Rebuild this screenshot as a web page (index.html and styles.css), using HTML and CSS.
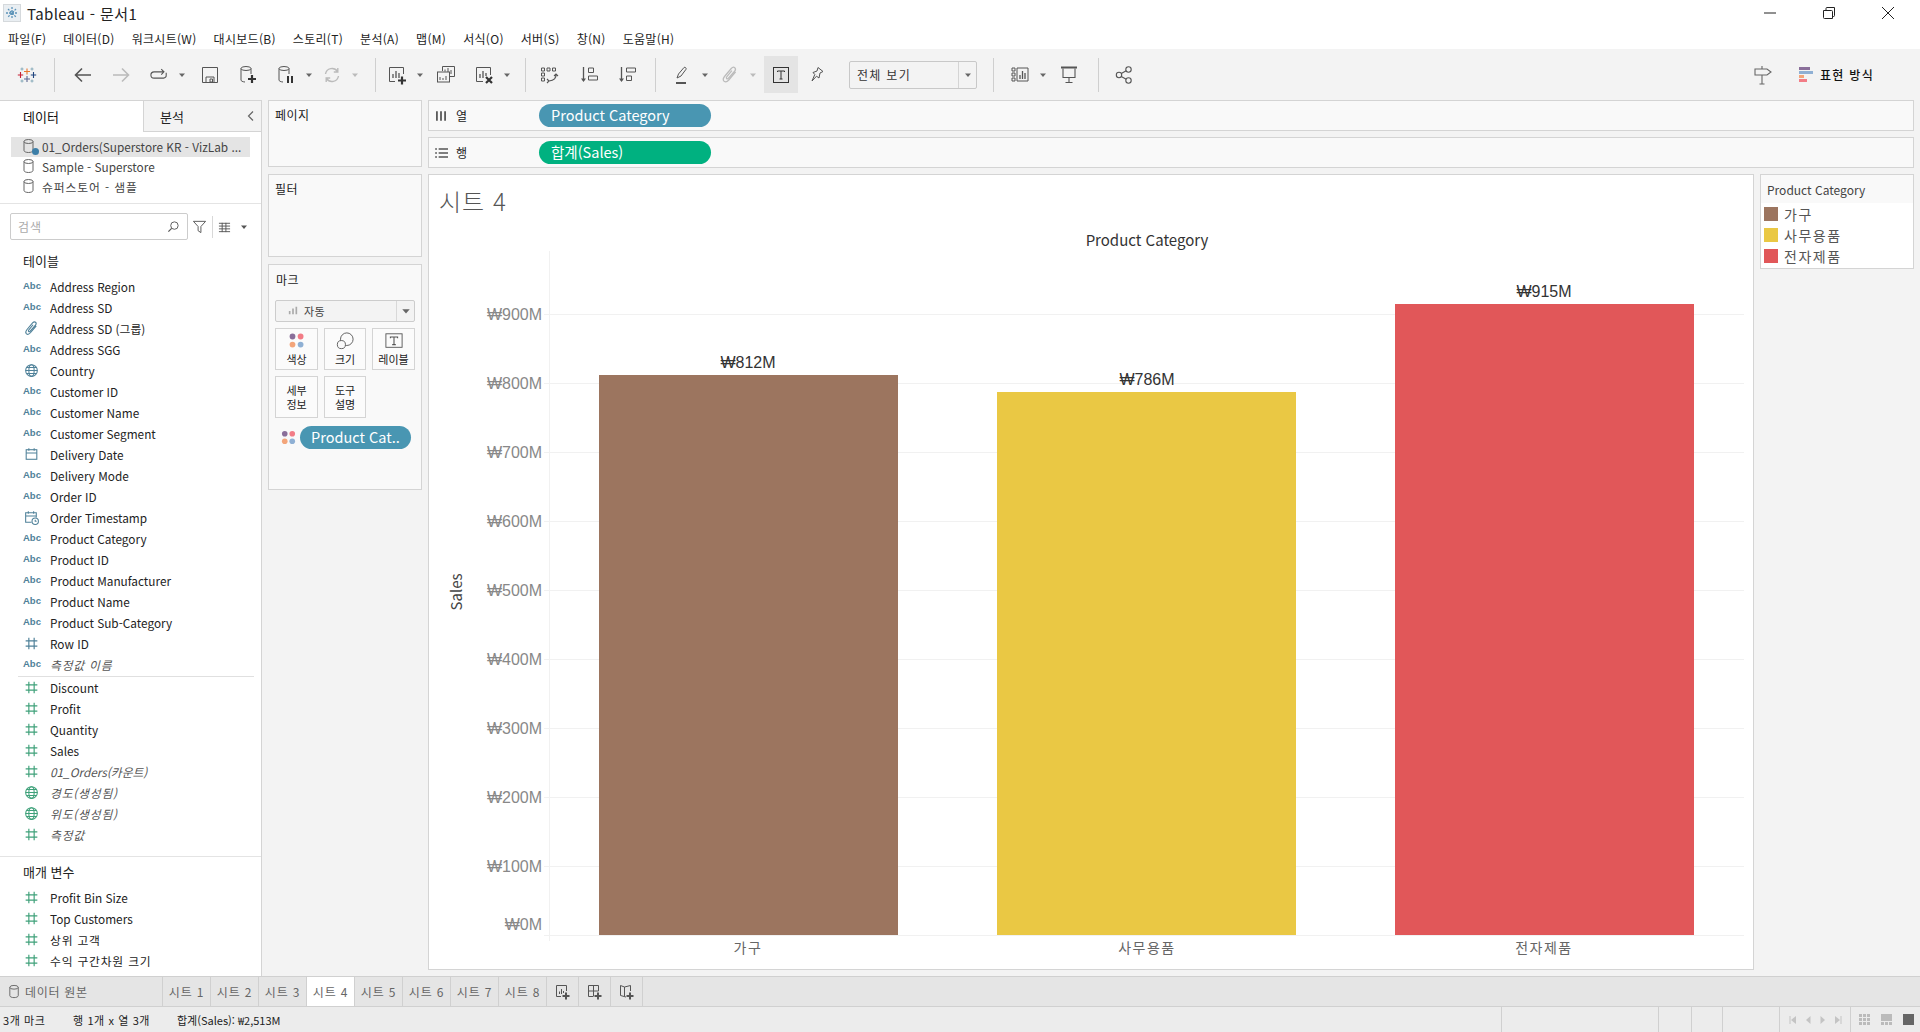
FILE: index.html
```html
<!DOCTYPE html>
<html lang="ko">
<head>
<meta charset="utf-8">
<title>Tableau - 문서1</title>
<link rel="stylesheet" href="styles.css">
</head>
<body>
<svg class="defs" aria-hidden="true">
  <symbol id="i-hash" viewBox="0 0 16 16"><path d="M5.500 2.500v11M10.500 2.500v11M2.500 5.500h11M2.500 10.500h11" fill="none" stroke="currentColor" stroke-width="1.100"/></symbol>
  <symbol id="i-globe" viewBox="0 0 16 16"><g fill="none" stroke="currentColor" stroke-width="1"><circle cx="8" cy="8" r="5.500"/><ellipse cx="8" cy="8" rx="2.500" ry="5.500"/><path d="M2.500 8h11M3.300 5.200h9.400M3.300 10.800h9.400"/></g></symbol>
  <symbol id="i-cal" viewBox="0 0 16 16"><g fill="none" stroke="currentColor" stroke-width="1"><rect x="3" y="3.500" width="10" height="9"/><path d="M3 6.500h10M5.500 2v2.500M10.500 2v2.500"/></g></symbol>
  <symbol id="i-calclock" viewBox="0 0 16 16"><g fill="none" stroke="currentColor" stroke-width="1"><path d="M8 12.500H2.500v-9h10V8M2.500 6.500h10M5 2v2.500M10 2v2.500"/><circle cx="11.500" cy="11.500" r="3"/><path d="M11.500 10v1.600h1.300"/></g></symbol>
  <symbol id="i-clip" viewBox="0 0 16 16"><path d="M12.500 5.500 7 12c-1.300 1.500-2.700 1.800-3.700 1-1-.9-.9-2.300.3-3.800l5.400-6.400c1-1.100 2-1.300 2.800-.7.800.7.800 1.700-.1 2.800L6.800 10.500c-.5.600-1.100.7-1.500.4-.4-.4-.3-1 .2-1.600l4-4.800" fill="none" stroke="currentColor" stroke-width="1"/></symbol>
  <symbol id="i-db" viewBox="0 0 16 16"><g fill="none" stroke="currentColor" stroke-width="1"><ellipse cx="7.500" cy="3.500" rx="4.500" ry="2"/><path d="M3 3.500v9c0 1.100 2 2 4.500 2s4.500-.9 4.500-2v-9"/></g></symbol>
  <symbol id="i-dd" viewBox="0 0 8 8"><path d="M1 2.500h6L4 6z" fill="currentColor"/></symbol>
</svg>

<header class="titlebar">
  <svg class="app-icon" viewBox="0 0 18 18"><rect x=".5" y=".5" width="17" height="17" fill="#e9eef2" stroke="#d5d9dc"/><path d="M9 3v12M3 9h12M5 5l8 8M13 5l-8 8" stroke="#5c93b8" stroke-width="1.300" stroke-dasharray="2 1"/></svg>
  <span class="app-title">Tableau - 문서1</span>
  <div class="winctl">
    <svg viewBox="0 0 14 14"><path d="M1 7h12" stroke="#222" fill="none"/></svg>
    <svg viewBox="0 0 14 14"><path d="M1.500 4.500h8a1 1 0 0 1 1 1v7h-8a1 1 0 0 1-1-1zM4 4.500V2.500a1 1 0 0 1 1-1h7.500v8a1 1 0 0 1-1 1h-1" stroke="#222" fill="none"/></svg>
    <svg viewBox="0 0 14 14"><path d="M1 1l12 12M13 1 1 13" stroke="#222" fill="none"/></svg>
  </div>
</header>

<nav class="menubar">
  <span>파일(F)</span><span>데이터(D)</span><span>워크시트(W)</span><span>대시보드(B)</span><span>스토리(T)</span><span>분석(A)</span><span>맵(M)</span><span>서식(O)</span><span>서버(S)</span><span>창(N)</span><span>도움말(H)</span>
</nav>

<div class="toolbar">
  <div class="tb"><svg viewBox="0 0 20 20"><g fill="none" stroke-width="1.100"><path d="M10 3.500v6M7 6.500h6" stroke="#e8762c"/><path d="M10 11v6M7 14h6" stroke="#5b6591"/><path d="M3.500 7v6M.8 10h5.400" stroke="#c72035"/><path d="M16.500 7v6M13.800 10h5.400" stroke="#1f447e"/><path d="M5 2.500v3M3.500 4h3M15 2.500v3M13.500 4h3M5 14.500v3M3.500 16h3M15 14.500v3M13.500 16h3" stroke="#7fa5b5" stroke-width=".9"/></g></svg></div>
  <i class="sep ml-8 mr-9"></i>
  <div class="tb"><svg viewBox="0 0 20 20"><path d="M18 10H3M9 3.500 2.500 10 9 16.500" fill="none" stroke="#555" stroke-width="1.600"/></svg></div>
  <div class="tb off"><svg viewBox="0 0 20 20"><path d="M2 10h15M11 3.500l6.500 6.500-6.500 6.500" fill="none" stroke="#bbb" stroke-width="1.600"/></svg></div>
  <div class="tb"><svg class="loop" viewBox="0 0 20 20"><path d="M15 6.500H4.500a3 3 0 0 0 0 7H15a3 3 0 0 0 3-3.500V7.500M12.500 3.500l3 3-3 3" fill="none" stroke="#555" stroke-width="1.200"/></svg></div>
  <svg class="dd"><use href="#i-dd"/></svg>
  <div class="tb ml-5"><svg viewBox="0 0 20 20"><path d="M2.500 2.500h15v15h-15zM6 17v-5h8v5M10 14h2.500v3H10z" fill="none" stroke="#555"/></svg></div>
  <div class="tb"><svg viewBox="0 0 20 20"><g fill="none" stroke="#555"><ellipse cx="8" cy="3.500" rx="5" ry="2"/><path d="M3 3.500V15c0 1 1.500 1.800 4 2M13 3.500V9"/></g><path d="M14 10v8M10 14h8" stroke="#333" stroke-width="2.200"/></svg></div>
  <div class="tb"><svg viewBox="0 0 20 20"><g fill="none" stroke="#555"><ellipse cx="8" cy="3.500" rx="5" ry="2"/><path d="M3 3.500V15c0 1 1.500 1.800 4 2M13 3.500V9"/></g><path d="M12 11v7M16 11v7" stroke="#333" stroke-width="2"/></svg></div>
  <svg class="dd"><use href="#i-dd"/></svg>
  <div class="tb off"><svg viewBox="0 0 20 20"><path d="M3.500 9a6.600 6.600 0 0 1 12-2.500M16.500 11a6.600 6.600 0 0 1-12 2.500M15.800 3v4h-4M4.200 17v-4h4" fill="none" stroke="#bbb" stroke-width="1.400"/></svg></div>
  <svg class="dd off"><use href="#i-dd"/></svg>
  <i class="sep ml-16 mr-2"></i>
  <div class="tb"><svg viewBox="0 0 20 20"><path d="M8 16.500H2.500v-14h14V9" fill="none" stroke="#555"/><path d="M6 13V9M9 13V6M12 13V8" stroke="#555" stroke-width="1.300"/><path d="M15 11.500v8M11 15.500h8" stroke="#333" stroke-width="2.200"/></svg></div>
  <svg class="dd"><use href="#i-dd"/></svg>
  <div class="tb ml-3"><svg viewBox="0 0 20 20"><g fill="none" stroke="#555"><path d="M6.500 6V1.500h12v10H14"/><rect x="1.500" y="7" width="12" height="10"/></g><path d="M9 4.500v2M12 3v4M15 5v4M4 15v-3M7 15v-2M10 15v-4" stroke="#555"/></svg></div>
  <div class="tb"><svg viewBox="0 0 20 20"><path d="M9 16.500H2.500v-14h14V10" fill="none" stroke="#555"/><path d="M6 13V9M9 13V6M12 11V8" stroke="#555" stroke-width="1.300"/><path d="M12 12l6 6M18 12l-6 6" stroke="#333" stroke-width="2.200"/></svg></div>
  <svg class="dd"><use href="#i-dd"/></svg>
  <i class="sep ml-14 mr-4"></i>
  <div class="tb"><svg viewBox="0 0 20 20"><path d="M2.500 3h3v3h-3zM8 3h3v3H8zM13.500 3h3v3h-3zM2.500 8h3v3h-3zM2.500 13h3v3h-3z" fill="none" stroke="#555"/><path d="M17 9c.5 4-2 6.500-7 7M8 14l2 2-2 2M15 11l2-2 2 2" fill="none" stroke="#555" stroke-width="1.100"/></svg></div>
  <div class="tb ml-2"><svg viewBox="0 0 20 20"><path d="M4.500 2v14" stroke="#555" stroke-width="1.300"/><path d="M2 13.500l2.500 3.500L7 13.500z" fill="#555"/><path d="M9.500 3h5v4.500h-5zM9.500 11h9v4h-9z" fill="none" stroke="#555"/></svg></div>
  <div class="tb"><svg viewBox="0 0 20 20"><path d="M4.500 2v14" stroke="#555" stroke-width="1.300"/><path d="M2 13.500l2.500 3.500L7 13.500z" fill="#555"/><path d="M9.500 3h9v4h-9zM9.500 11h5v4.500h-5z" fill="none" stroke="#555"/></svg></div>
  <i class="sep ml-9 mr-7"></i>
  <div class="tb"><svg viewBox="0 0 20 20"><path d="M5 13l1.500-4L12 2.500c1-.8 2.700.6 2 1.800L9 11z" fill="none" stroke="#555"/><path d="M4 18h10" stroke="#555" stroke-width="2"/></svg></div>
  <svg class="dd"><use href="#i-dd"/></svg>
  <div class="tb off ml-2"><svg viewBox="0 0 16 16"><use href="#i-clip"/></svg></div>
  <svg class="dd off"><use href="#i-dd"/></svg>
  <div class="tb tb-on ml-7"><svg viewBox="0 0 20 20"><rect x="2.500" y="2.500" width="15" height="15" fill="none" stroke="#333"/><path d="M6.500 7V6h7v1M10 6v8M8.500 14h3" fill="none" stroke="#333"/></svg></div>
  <div class="tb"><svg viewBox="0 0 20 20"><path d="M11 2.500l5 4-3 1.500-1 5-2.500-1.800L5 16l2.800-6.500L6 7.500l4-1.500z" fill="none" stroke="#555"/></svg></div>
  <div class="fit ml-13"><span class="fit-label">전체 보기</span><span class="fit-arrow"><svg class="dd"><use href="#i-dd"/></svg></span></div>
  <i class="sep ml-16 mr-7"></i>
  <div class="tb"><svg viewBox="0 0 20 20"><path d="M2 3h3v3H2zM2 8h3v3H2zM2 13h3v3H2zM7 3h11v13H7z" fill="none" stroke="#555"/><path d="M10 14V10M12.500 14V6M15 14V8" stroke="#555" stroke-width="1.300"/></svg></div>
  <svg class="dd"><use href="#i-dd"/></svg>
  <div class="tb ml-3"><svg viewBox="0 0 20 20"><path d="M4 3.500v9h12v-9M10 12.500V17M6.500 17.500h7" fill="none" stroke="#555" stroke-width="1.100"/><path d="M2 2.500h16" stroke="#555" stroke-width="2"/></svg></div>
  <i class="sep ml-10 mr-6"></i>
  <div class="tb"><svg viewBox="0 0 20 20"><g fill="none" stroke="#555" stroke-width="1.100"><circle cx="5" cy="10" r="2.700"/><circle cx="14.500" cy="4.500" r="2.700"/><circle cx="14.500" cy="15.500" r="2.700"/><path d="M7.300 8.600l4.900-2.800M7.300 11.400l4.900 2.800"/></g></svg></div>
  <div class="tb-right">
    <svg class="sign" viewBox="0 0 20 20"><path d="M2 4h12l4 3-4 3H2zM9 1v3M9 10v9M6.500 19h5" fill="none" stroke="#666" stroke-width="1.100"/></svg>
    <div class="showme">
      <svg viewBox="0 0 15 16"><rect y="0" width="11" height="3" fill="#8a6f9a"/><rect y="4" width="14" height="3" fill="#8fb0d4"/><rect y="8" width="5" height="3" fill="#f3a57a"/><rect y="12" width="8" height="3" fill="#f27c86"/></svg>
      <span>표현 방식</span>
    </div>
  </div>
</div>

<main class="workspace">
  <aside class="sidebar">
    <div class="side-tabs">
      <div class="side-tab on">데이터</div>
      <div class="side-tab">분석<svg class="chev" viewBox="0 0 8 12"><path d="M6 1.500 1.500 6 6 10.500" fill="none" stroke="#666" stroke-width="1.200"/></svg></div>
    </div>
    <ul class="sources">
      <li class="source sel"><svg class="src-ico"><use href="#i-db"/></svg><b class="src-check"></b>01_Orders(Superstore KR - VizLab ...</li>
      <li class="source"><svg class="src-ico"><use href="#i-db"/></svg>Sample - Superstore</li>
      <li class="source ko"><svg class="src-ico"><use href="#i-db"/></svg>슈퍼스토어 - 샘플</li>
    </ul>
    <div class="searchrow">
      <div class="search"><span>검색</span><svg viewBox="0 0 14 14"><circle cx="8" cy="6" r="4" fill="none" stroke="#555"/><path d="M5 9l-3.500 3.500" stroke="#555" stroke-width="1.300"/></svg></div>
      <svg class="funnel" viewBox="0 0 16 16"><path d="M1.500 2.500h13L9.500 8v6.500l-3-2V8z" fill="none" stroke="#555"/></svg>
      <i class="search-sep"></i>
      <svg class="gridico" viewBox="0 0 14 12"><path d="M1 2h12M1 5h12M1 8h12M1 11h12M4.500 1.500v10M8.500 1.500v10" stroke="#555"/></svg>
      <svg class="griddd"><use href="#i-dd"/></svg>
    </div>
    <h2 class="side-h">테이블</h2>
    <ul class="fields">
      <li class="f"><span class="abc">Abc</span>Address Region</li>
      <li class="f"><span class="abc">Abc</span>Address SD</li>
      <li class="f"><svg class="fi"><use href="#i-clip"/></svg>Address SD (그룹)</li>
      <li class="f"><span class="abc">Abc</span>Address SGG</li>
      <li class="f"><svg class="fi"><use href="#i-globe"/></svg>Country</li>
      <li class="f"><span class="abc">Abc</span>Customer ID</li>
      <li class="f"><span class="abc">Abc</span>Customer Name</li>
      <li class="f"><span class="abc">Abc</span>Customer Segment</li>
      <li class="f"><svg class="fi"><use href="#i-cal"/></svg>Delivery Date</li>
      <li class="f"><span class="abc">Abc</span>Delivery Mode</li>
      <li class="f"><span class="abc">Abc</span>Order ID</li>
      <li class="f"><svg class="fi"><use href="#i-calclock"/></svg>Order Timestamp</li>
      <li class="f"><span class="abc">Abc</span>Product Category</li>
      <li class="f"><span class="abc">Abc</span>Product ID</li>
      <li class="f"><span class="abc">Abc</span>Product Manufacturer</li>
      <li class="f"><span class="abc">Abc</span>Product Name</li>
      <li class="f"><span class="abc">Abc</span>Product Sub-Category</li>
      <li class="f"><svg class="fi"><use href="#i-hash"/></svg>Row ID</li>
      <li class="f gen ko"><span class="abc">Abc</span>측정값 이름</li>
    </ul>
    <hr class="split">
    <ul class="fields">
      <li class="f m"><svg class="fi"><use href="#i-hash"/></svg>Discount</li>
      <li class="f m"><svg class="fi"><use href="#i-hash"/></svg>Profit</li>
      <li class="f m"><svg class="fi"><use href="#i-hash"/></svg>Quantity</li>
      <li class="f m"><svg class="fi"><use href="#i-hash"/></svg>Sales</li>
      <li class="f m gen"><svg class="fi"><use href="#i-hash"/></svg>01_Orders(카운트)</li>
      <li class="f m gen ko"><svg class="fi"><use href="#i-globe"/></svg>경도(생성됨)</li>
      <li class="f m gen ko"><svg class="fi"><use href="#i-globe"/></svg>위도(생성됨)</li>
      <li class="f m gen ko"><svg class="fi"><use href="#i-hash"/></svg>측정값</li>
    </ul>
    <hr class="split-full">
    <h2 class="side-h params">매개 변수</h2>
    <ul class="fields">
      <li class="f m"><svg class="fi"><use href="#i-hash"/></svg>Profit Bin Size</li>
      <li class="f m"><svg class="fi"><use href="#i-hash"/></svg>Top Customers</li>
      <li class="f m ko"><svg class="fi"><use href="#i-hash"/></svg>상위 고객</li>
      <li class="f m ko"><svg class="fi"><use href="#i-hash"/></svg>수익 구간차원 크기</li>
    </ul>
  </aside>

  <section class="cards">
    <div class="card card-pages"><div class="card-t">페이지</div></div>
    <div class="card card-filters"><div class="card-t">필터</div></div>
    <div class="card card-marks">
      <div class="card-t marks-t">마크</div>
      <div class="mark-type">
        <svg viewBox="0 0 12 12"><path d="M2 10V6M6 10V3M10 10V1" stroke="#aaa" stroke-width="2"/></svg>
        <span>자동</span>
        <span class="mark-arrow"><svg class="dd"><use href="#i-dd"/></svg></span>
      </div>
      <div class="mark-grid">
        <div class="mbtn"><svg viewBox="0 0 20 20"><circle cx="5" cy="5" r="3.200" fill="#8a6f9a"/><circle cx="14" cy="5" r="3.200" fill="#f27c86"/><circle cx="5" cy="14" r="3.200" fill="#f3a57a"/><circle cx="14" cy="14" r="3.200" fill="#8fb0d4"/></svg><span>색상</span></div>
        <div class="mbtn"><svg viewBox="0 0 20 20"><circle cx="12" cy="8" r="7" fill="none" stroke="#555"/><circle cx="6" cy="14" r="4.500" fill="#f9f9f9" stroke="#555"/></svg><span>크기</span></div>
        <div class="mbtn"><svg viewBox="0 0 20 20"><rect x="1" y="2" width="18" height="15" fill="none" stroke="#555"/><path d="M6 7V5.500h8V7M10 5.500V14M8 14h4" fill="none" stroke="#555" stroke-width="1.200"/></svg><span>레이블</span></div>
        <div class="mbtn two"><span>세부</span><span>정보</span></div>
        <div class="mbtn two"><span>도구</span><span>설명</span></div>
      </div>
      <div class="mark-pill">
        <svg viewBox="0 0 16 16"><circle cx="4" cy="4" r="3" fill="#8a6f9a"/><circle cx="12" cy="4" r="3" fill="#f27c86"/><circle cx="4" cy="12" r="3" fill="#f3a57a"/><circle cx="12" cy="12" r="3" fill="#8fb0d4"/></svg>
        <span class="pill dim small">Product Cat..</span>
      </div>
    </div>
  </section>

  <section class="canvas">
    <div class="shelf">
      <div class="shelf-l"><svg viewBox="0 0 12 12"><path d="M2.500 2v8M6 2v8M9.500 2v8" stroke="#555" stroke-width="1.500"/></svg><span>열</span></div>
      <span class="pill dim">Product Category</span>
    </div>
    <div class="shelf">
      <div class="shelf-l"><svg viewBox="0 0 12 12"><path d="M1 2.500h1.500M4 2.500h8M1 6h1.500M4 6h8M1 9.500h1.500M4 9.500h8" stroke="#555" stroke-width="1.300"/></svg><span>행</span></div>
      <span class="pill mea">합계(Sales)</span>
    </div>
    <div class="viewrow">
      <div class="sheet">
        <h1 class="sheet-t">시트 4</h1>
        <svg class="chart" viewBox="429 226 1324 743">
          <text class="c-title" x="1147" y="246">Product Category</text>
          <g class="grid">
            <path d="M549.500 251V941"/>
            <path d="M544 314.500H1744M544 383.500H1744M544 452.500H1744M544 521.500H1744M544 590.500H1744M544 659.500H1744M544 728.500H1744M544 797.500H1744M544 866.500H1744M544 935.500H1744"/>
          </g>
          <g class="ylabels">
            <text x="542" y="320">₩900M</text>
            <text x="542" y="389">₩800M</text>
            <text x="542" y="458">₩700M</text>
            <text x="542" y="527">₩600M</text>
            <text x="542" y="596">₩500M</text>
            <text x="542" y="665">₩400M</text>
            <text x="542" y="734">₩300M</text>
            <text x="542" y="803">₩200M</text>
            <text x="542" y="872">₩100M</text>
            <text x="542" y="930">₩0M</text>
          </g>
          <text class="y-title" transform="translate(462 592) rotate(-90)">Sales</text>
          <rect x="599" y="375" width="299" height="560" fill="#9c755f"/>
          <rect x="997" y="392" width="299" height="543" fill="#eac844"/>
          <rect x="1395" y="304" width="299" height="631" fill="#e15759"/>
          <g class="vlabels">
            <text x="748" y="368">₩812M</text>
            <text x="1147" y="385">₩786M</text>
            <text x="1544" y="297">₩915M</text>
          </g>
          <g class="xlabels">
            <text x="748" y="953">가구</text>
            <text x="1147" y="953">사무용품</text>
            <text x="1544" y="953">전자제품</text>
          </g>
        </svg>
      </div>
      <div class="legend">
        <div class="legend-h">Product Category</div>
        <div class="legend-i"><i class="sw sw-a"></i>가구</div>
        <div class="legend-i"><i class="sw sw-b"></i>사무용품</div>
        <div class="legend-i"><i class="sw sw-c"></i>전자제품</div>
      </div>
    </div>
  </section>
</main>

<div class="tabbar">
  <div class="ds-tab"><svg viewBox="0 0 16 16"><use href="#i-db"/></svg>데이터 원본</div>
  <div class="stab">시트 1</div><div class="stab">시트 2</div><div class="stab">시트 3</div><div class="stab on">시트 4</div><div class="stab">시트 5</div><div class="stab">시트 6</div><div class="stab">시트 7</div><div class="stab">시트 8</div>
  <div class="addtab"><svg viewBox="0 0 16 16"><path d="M6 12.500H1.500v-11h10V7" fill="none" stroke="#555"/><path d="M4.500 10V7.500M6.500 10V5M8.500 9V7" stroke="#555"/><path d="M11 8.500v7M7.500 12h7" stroke="#555" stroke-width="2"/></svg></div>
  <div class="addtab"><svg viewBox="0 0 16 16"><path d="M6 12.500H1.500v-11h10V7M1.500 7h10M6.500 1.500v11" fill="none" stroke="#555"/><path d="M11 8.500v7M7.500 12h7" stroke="#555" stroke-width="2"/></svg></div>
  <div class="addtab"><svg viewBox="0 0 16 16"><path d="M7 13 1.500 11.500v-10l4 1.500 6-1.500V7M5.500 3v9" fill="none" stroke="#555"/><path d="M11 8.500v7M7.500 12h7" stroke="#555" stroke-width="2"/></svg></div>
</div>

<footer class="statusbar">
  <div class="st-main"><span class="st-a">3개 마크</span><span class="st-b">행 1개 x 열 3개</span><span>합계(Sales): ₩2,513M</span></div>
  <i class="st-c st-c1"></i><i class="st-c st-c2"></i><i class="st-c st-c3"></i><i class="st-c st-c4"></i>
  <div class="st-nav">
    <svg viewBox="0 0 8 10"><path d="M1 1v8" stroke="#c4c4c4"/><path d="M7 1v8L2 5z" fill="#c4c4c4"/></svg>
    <svg viewBox="0 0 8 10"><path d="M6.500 1v8L2 5z" fill="#c4c4c4"/></svg>
    <svg viewBox="0 0 8 10"><path d="M1.500 1v8L6 5z" fill="#c4c4c4"/></svg>
    <svg viewBox="0 0 8 10"><path d="M7 1v8" stroke="#c4c4c4"/><path d="M1 1v8l5-4z" fill="#c4c4c4"/></svg>
  </div>
  <div class="st-view">
    <svg viewBox="0 0 11 11"><path d="M0 0h3v3H0zM4 0h3v3H4zM8 0h3v3H8zM0 4h3v3H0zM4 4h3v3H4zM8 4h3v3H8zM0 8h3v3H0zM4 8h3v3H4zM8 8h3v3H8z" fill="#bbb"/></svg>
    <svg viewBox="0 0 11 11"><path d="M0 0h11v7H0zM0 8h3v3H0zM4 8h3v3H4zM8 8h3v3H8z" fill="#bbb"/></svg>
    <svg viewBox="0 0 11 11"><path d="M0 0h11v11H0z" fill="#666"/></svg>
  </div>
</footer>
</body>
</html>
```
FILE: styles.css
```css
* { box-sizing: border-box; }
html, body { margin: 0; height: 100%; }
body {
  width: 1920px; height: 1032px; overflow: hidden;
  display: flex; flex-direction: column;
  font: 12px "Noto Sans CJK KR", "Noto Sans", sans-serif;
  color: #222; background: #f3f3f3;
}
ul { list-style: none; margin: 0; padding: 0; }
h1, h2 { margin: 0; font-weight: 400; }
.defs { display: none; }

/* title + menu */
.titlebar { height: 26px; background: #fff; display: flex; align-items: center; padding-left: 3px; flex: none; }
.app-icon { width: 18px; height: 18px; }
.app-title { font-size: 15px; margin-left: 6px; color: #222; letter-spacing: .4px; }
.winctl { margin-left: auto; display: flex; }
.winctl svg { width: 14px; height: 14px; margin-right: 45px; }
.winctl svg:last-child { margin-right: 25px; }
.menubar { height: 23px; background: #fff; display: flex; align-items: center; gap: 17px; padding: 2px 0 0 8px; flex: none; font-size: 12px; letter-spacing: .3px; color: #222; }

/* toolbar */
.toolbar { height: 51px; flex: none; display: flex; align-items: center; padding-left: 8px; background: #f3f3f3; }
.tb { width: 38px; height: 37px; flex: none; display: flex; align-items: center; justify-content: center; }
.tb svg { width: 20px; height: 20px; }
.tb svg.loop { width: 18px; height: 18px; }
.tb.off { color: #bbb; }
.tb-on { width: 34px; background: #e4e4e4; }
.dd { width: 8px; height: 8px; flex: none; color: #666; }
.dd.off { color: #bbb; }
.off svg { fill: none; stroke: #bbb; }
.sep { width: 1px; height: 34px; background: #cfcfcf; flex: none; }
.ml-2 { margin-left: 2px; } .ml-3 { margin-left: 3px; } .ml-5 { margin-left: 5px; } .ml-7 { margin-left: 7px; }
.ml-8 { margin-left: 8px; } .ml-9 { margin-left: 9px; } .ml-10 { margin-left: 10px; } .ml-13 { margin-left: 13px; }
.ml-14 { margin-left: 14px; } .ml-16 { margin-left: 16px; }
.mr-2 { margin-right: 2px; } .mr-4 { margin-right: 4px; } .mr-6 { margin-right: 6px; } .mr-7 { margin-right: 7px; } .mr-9 { margin-right: 9px; }
.fit { width: 128px; height: 28px; border: 1px solid #c8c8c8; border-radius: 2px; display: flex; align-items: center; flex: none; font-size: 12px; letter-spacing: 1.300px; color: #333; }
.fit-label { flex: 1; padding-left: 7px; }
.fit-arrow { width: 18px; height: 100%; border-left: 1px solid #d4d4d4; display: flex; align-items: center; justify-content: center; }
.tb-right { margin-left: auto; display: flex; align-items: center; padding-right: 46px; }
.sign { width: 20px; height: 20px; margin-right: 26px; }
.showme { display: flex; align-items: center; gap: 6px; font-size: 12px; font-weight: 500; color: #111; letter-spacing: 1.300px; }
.showme svg { width: 15px; height: 16px; }

/* workspace */
.workspace { flex: 1; min-height: 0; display: flex; background: #f3f3f3; }
.sidebar { width: 262px; flex: none; background: #fff; border-right: 1px solid #d4d4d4; overflow: hidden; }
.side-tabs { height: 32px; display: flex; border-top: 1px solid #d4d4d4; }
.side-tab { display: flex; align-items: center; font-size: 13px; }
.side-tab.on { width: 143px; padding-left: 23px; color: #111; }
.side-tab:not(.on) { flex: 1; padding-left: 16px; background: #f3f3f3; border-left: 1px solid #d4d4d4; border-bottom: 1px solid #d4d4d4; justify-content: space-between; padding-right: 6px; }
.chev { width: 8px; height: 12px; }
.sources { padding: 5px 0 7px 11px; border-bottom: 1px solid #e4e4e4; height: 72px; }
.source { height: 20px; width: 239px; display: flex; align-items: center; padding: 0 0 2px 10px; color: #444; font-size: 11.800px; position: relative; white-space: nowrap; }
.source.ko { letter-spacing: .9px; }
.source.sel { background: #e4e4e4; }
.src-ico { width: 16px; height: 16px; margin-right: 5px; color: #666; flex: none; }
.src-check { position: absolute; left: 21px; top: 11px; width: 7px; height: 7px; border-radius: 50%; background: #3d7fa8; }
.searchrow { display: flex; align-items: center; height: 27px; margin: 9px 0 0 10px; }
.search { width: 178px; height: 27px; border: 1px solid #ccc; border-radius: 2px; display: flex; align-items: center; justify-content: space-between; padding: 0 7px; color: #aaa; letter-spacing: 1px; }
.search svg { width: 13px; height: 13px; }
.funnel { width: 15px; height: 15px; margin-left: 4px; }
.search-sep { width: 1px; height: 22px; background: #d8d8d8; margin-left: 5px; }
.gridico { width: 13px; height: 12px; margin-left: 5px; }
.griddd { width: 8px; height: 8px; margin-left: 9px; color: #555; }
.side-h { font-size: 13px; height: 24px; line-height: 24px; padding-left: 23px; margin-top: 9px; margin-bottom: 3px; color: #222; }
.side-h.params { margin-top: 3px; margin-bottom: 2px; height: 25px; }
.f { height: 21px; display: flex; align-items: center; padding-left: 50px; position: relative; color: #222; white-space: nowrap; font-size: 11.800px; }
.f.ko { letter-spacing: .8px; }
.abc { position: absolute; left: 23px; top: 4px; font: 700 9.500px/12px "Liberation Sans", sans-serif; color: #4f8199; letter-spacing: 0; }
.fi { position: absolute; left: 23px; top: 2px; width: 17px; height: 17px; color: #4f8199; }
.m .fi { color: #3fa17a; }
.gen { font-style: italic; color: #555; }
.split { height: 1px; border: 0; background: #e0e0e0; margin: 1px 7px 0 18px; }
.split-full { height: 1px; border: 0; background: #e4e4e4; margin: 11px 0 0; }

/* cards */
.cards { width: 166px; flex: none; padding: 0 6px 0 6px; display: flex; flex-direction: column; gap: 7px; }
.card { background: #f9f9f9; border: 1px solid #d4d4d4; flex: none; }
.card-pages { height: 67px; }
.card-filters { height: 83px; }
.card-marks { height: 226px; padding: 0 6px; }
.card-t { padding: 6px 6px; font-size: 12px; line-height: 16px; letter-spacing: .5px; }
.marks-t { padding: 7px 1px 0; height: 35px; }
.mark-type { height: 22px; border: 1px solid #ccc; border-radius: 2px; background: #f3f3f3; display: flex; align-items: center; padding-left: 12px; gap: 6px; font-size: 11px; letter-spacing: .5px; color: #444; width: 140px; }
.mark-type svg:first-child { width: 10px; height: 10px; }
.mark-arrow { margin-left: auto; width: 18px; height: 100%; border-left: 1px solid #d8d8d8; display: flex; align-items: center; justify-content: center; }
.mark-grid { display: grid; grid-template-columns: 43px 42px 43px; gap: 6px; margin-top: 6px; width: 140px; }
.mbtn { height: 42px; border: 1px solid #d4d4d4; background: #fbfbfb; display: flex; flex-direction: column; align-items: center; justify-content: center; font-size: 11px; line-height: 14px; color: #222; }
.mbtn svg { width: 18px; height: 18px; margin-bottom: 2px; }
.mark-pill { display: flex; align-items: center; gap: 4px; margin: 8px 0 0 6px; }
.mark-pill svg { width: 15px; height: 15px; }
.pill { display: block; height: 23px; line-height: 21px; border-radius: 12px; color: #fff; font-size: 14.500px; padding-left: 12px; width: 172px; white-space: nowrap; }
.pill.dim { background: #4996b2; }
.pill.mea { background: #00b180; }
.pill.small { width: 111px; padding-left: 11px; }

/* canvas */
.canvas { flex: 1; min-width: 0; padding-right: 6px; display: flex; flex-direction: column; gap: 6px; padding-bottom: 6px; }
.shelf { height: 31px; flex: none; background: #f9f9f9; border: 1px solid #d4d4d4; display: flex; align-items: center; }
.shelf-l { width: 110px; flex: none; display: flex; align-items: center; padding-left: 5px; gap: 8px; font-size: 12px; color: #222; }
.shelf-l svg { width: 14px; height: 14px; }
.viewrow { flex: 1; min-height: 0; display: flex; gap: 6px; align-items: flex-start; }
.sheet { width: 1326px; height: 796px; flex: none; background: #fff; border: 1px solid #d4d4d4; display: flex; flex-direction: column; }
.sheet-t { font-size: 24px; font-weight: 300; line-height: 52px; height: 51px; padding-left: 10px; color: #555; letter-spacing: 1px; flex: none; }
.chart { width: 1324px; height: 743px; display: block; flex: none; }
.chart text { font-family: "Liberation Sans", "Noto Sans CJK KR", sans-serif; }
.c-title { font-size: 15px; text-anchor: middle; fill: #333; font-family: "Noto Sans CJK KR", sans-serif !important; }
.grid path { stroke: #f1f1f1; fill: none; stroke-width: 1; }
.ylabels text { font-size: 16px; fill: #888; text-anchor: end; }
.y-title { font-size: 15px; fill: #444; text-anchor: middle; font-family: "Noto Sans CJK KR", sans-serif !important; }
.vlabels text { font-size: 16px; fill: #333; text-anchor: middle; }
.xlabels text { font-size: 14px; fill: #666; text-anchor: middle; font-family: "Noto Sans CJK KR", sans-serif !important; letter-spacing: 1.500px; }

.legend { width: 154px; height: 95px; flex: none; background: #fff; border: 1px solid #d4d4d4; }
.legend-h { height: 28px; line-height: 29px; padding-left: 6px; background: #f9f9f9; font-size: 12px; color: #444; }
.legend-i { height: 21px; display: flex; align-items: center; gap: 6px; padding-left: 3px; font-size: 14px; letter-spacing: 1.500px; color: #555; }
.sw { width: 14px; height: 14px; flex: none; }
.sw-a { background: #9c755f; } .sw-b { background: #eac844; } .sw-c { background: #e15759; }

/* tabs + status */
.tabbar { height: 31px; flex: none; display: flex; background: #e5e5e5; border-top: 1px solid #d0d0d0; border-bottom: 1px solid #d0d0d0; font-size: 12px; color: #666; }
.ds-tab { width: 163px; display: flex; align-items: center; gap: 3px; padding-left: 7px; border-right: 1px solid #d0d0d0; letter-spacing: .7px; }
.ds-tab svg { width: 15px; height: 15px; color: #666; }
.stab { width: 48px; display: flex; align-items: center; justify-content: center; border-right: 1px solid #d0d0d0; letter-spacing: .8px; }
.stab.on { background: #fff; }
.addtab { width: 32px; display: flex; align-items: center; justify-content: center; border-right: 1px solid #d0d0d0; }
.addtab svg { width: 16px; height: 16px; }
.statusbar { height: 25px; flex: none; display: flex; align-items: center; background: #ececec; font-size: 11px; color: #222; }
.st-main { width: 1501px; display: flex; padding-left: 3px; }
.st-a { width: 70px; letter-spacing: .6px; }
.st-b { width: 104px; letter-spacing: .6px; }
.st-c { height: 100%; border-left: 1px solid #d0d0d0; }
.st-c1 { width: 157px; } .st-c2 { width: 33px; } .st-c3 { width: 31px; } .st-c4 { width: 57px; }
.st-nav { width: 71px; height: 100%; border-left: 1px solid #d0d0d0; display: flex; align-items: center; justify-content: space-around; padding: 0 5px; }
.st-nav svg { width: 8px; height: 10px; }
.st-view { flex: 1; height: 100%; border-left: 1px solid #d0d0d0; display: flex; align-items: center; padding-left: 8px; gap: 11px; }
.st-view svg { width: 11px; height: 11px; }
```
